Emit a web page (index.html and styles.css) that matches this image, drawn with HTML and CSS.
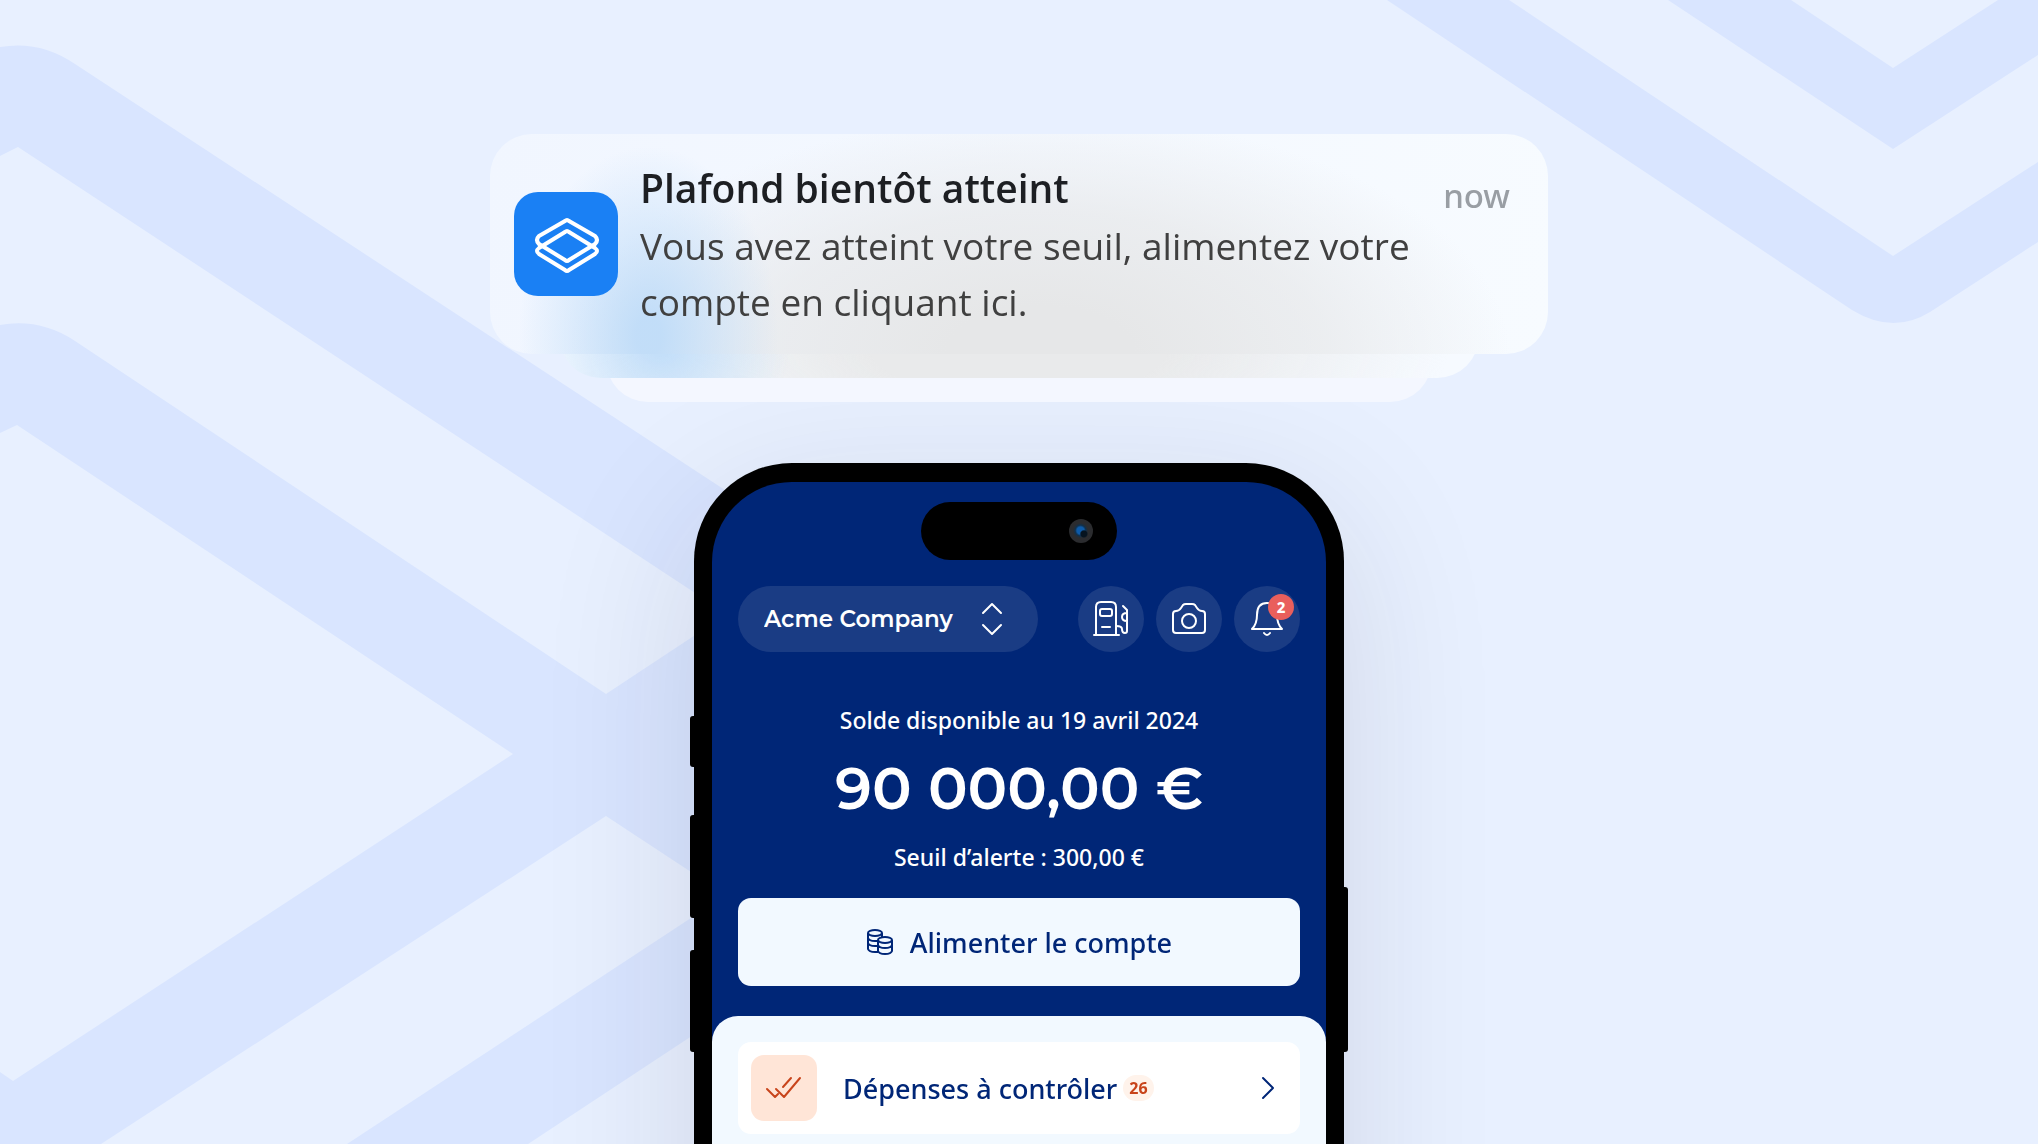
FILE: index.html
```
<!DOCTYPE html>
<html lang="fr">
<head>
  <meta charset="UTF-8">
  <meta name="viewport" content="width=device-width, initial-scale=1.0">
  <title>Plafond bientôt atteint</title>
  <link rel="stylesheet" href="styles.css">
</head>
<body>

<svg class="backdrop" viewBox="0 0 2038 1144" preserveAspectRatio="xMidYMid slice" aria-hidden="true">
  <g fill="#d9e5ff">
    <path d="M0 47Q40 40 75 64L760 513V1144H0Z"/>
    <path d="M1387 0L1852 310Q1893 335 1930 312L2038 242V162L1893 256L1509 0Z"/>
    <path d="M1668 0L1893 149L2038 55V0H1998L1893 68L1791 0Z"/>
  </g>
  <g fill="#e8f0ff">
    <path d="M0 156L18 147L727 614L606 694L75 341Q40 318 0 325Z"/>
    <path d="M0 433L17 425L513 754L13 1081L0 1072Z"/>
    <path d="M101 1144L606 816L726 895L347 1144Z"/>
    <path d="M528 1144L760 991V1144Z"/>
  </g>
</svg>

<main class="scene">
  <section class="stack">
    <article class="notif">
      <div class="notif-icon">
        <svg viewBox="0 0 104 104" fill="none" stroke="#fff" stroke-width="4" stroke-linejoin="round">
          <path d="M51 29Q53 27 55 29L81 44Q85 48 81 52L55 68Q53 70 51 68L25 52Q21 48 25 44Z"/>
          <path d="M51 40Q53 38 55 40L81 56Q85 59 81 62L55 78Q53 80 51 78L25 62Q21 59 25 56Z"/>
        </svg>
      </div>
      <div class="notif-text">
        <h1>Plafond bientôt atteint</h1>
        <p>Vous avez atteint votre seuil, alimentez votre compte en cliquant ici.</p>
      </div>
      <time class="notif-time">now</time>
    </article>
    <div class="peek peek-second"></div>
    <div class="peek peek-third"></div>
  </section>

  <section class="phone">
    <span class="side side-mute"></span>
    <span class="side side-up"></span>
    <span class="side side-down"></span>
    <span class="side side-power"></span>

    <div class="screen">
      <div class="island"><span class="camera"></span></div>

      <header class="topbar">
        <div class="company">
          <select aria-label="Entreprise">
            <option>Acme Company</option>
          </select>
          <svg viewBox="0 0 24 36" fill="none" stroke="#fff" stroke-width="2" stroke-linecap="round" stroke-linejoin="round">
            <path d="M3 12L12 3L21 12M3 24L12 33L21 24"/>
          </svg>
        </div>
        <button class="round" type="button" aria-label="Carburant">
          <svg viewBox="0 0 66 66">
            <path d="M18 49V21Q18 16 23 16H33Q38 16 38 21V49M16 49H41"/>
            <rect x="22" y="23" width="12" height="7" rx="2"/>
            <path d="M24 41H32M45 20L49 24V45Q49 47 47 47Q44 47 44 43Q44 40 38 40M49 27Q44 27 44 31Q44 35 49 35"/>
          </svg>
        </button>
        <button class="round" type="button" aria-label="Appareil photo">
          <svg viewBox="0 0 66 66">
            <path d="M17 28Q17 25 20 25Q23 25 25 22L27 19Q28 18 30 18H36Q38 18 39 19L41 22Q43 25 46 25Q49 25 49 28V44Q49 47 46 47H20Q17 47 17 44Z"/>
            <circle cx="33" cy="35" r="7"/>
          </svg>
        </button>
        <button class="round" type="button" aria-label="Notifications">
          <svg viewBox="0 0 66 66">
            <path d="M18 43H48Q43 38 43 29Q43 17 33 17Q23 17 23 29Q23 38 18 43ZM30 47Q33 51 36 47"/>
          </svg>
          <span class="count">2</span>
        </button>
      </header>

      <div class="balance">
        <p>Solde disponible au 19 avril 2024</p>
        <strong>90 000,00 €</strong>
        <p>Seuil d’alerte : 300,00 €</p>
      </div>

      <button class="fund" type="button">
        <svg viewBox="0 0 28 28" fill="none" stroke="#002677" stroke-width="2">
          <ellipse cx="9" cy="5" rx="7" ry="3"/>
          <path d="M2 5V21Q3 24 9 24H12M2 10Q3 13 9 13H12M2 15Q3 18 9 18H12M16 5V9"/>
          <ellipse cx="19" cy="12" rx="7" ry="3"/>
          <path d="M12 12V23Q13 26 19 26Q25 26 26 23V12M12 17Q13 20 19 20Q25 20 26 17"/>
        </svg>
        Alimenter le compte
      </button>

      <div class="sheet">
        <a class="task" href="#">
          <span class="task-icon">
            <svg viewBox="0 0 38 28" fill="none" stroke="#c8441b" stroke-width="2" stroke-linecap="round" stroke-linejoin="round">
              <path d="M2 15L10 23L13 20M11 15L19 23L35 4M18 13L26 4"/>
            </svg>
          </span>
          <span class="task-label">Dépenses à contrôler</span>
          <span class="task-badge">26</span>
          <svg class="task-arrow" viewBox="0 0 14 24" fill="none" stroke="#002677" stroke-width="2" stroke-linecap="round" stroke-linejoin="round">
            <path d="M2 2L12 12L2 22"/>
          </svg>
        </a>
      </div>
    </div>
  </section>
</main>

</body>
</html>
```

FILE: styles.css
```
* {
  box-sizing: border-box;
}
body {
  margin: 0;
  background-color: #e8f0ff;
  font-family: "Noto Sans", "Open Sans", sans-serif;
}
p, h1 {
  margin: 0;
}
button, select {
  font-family: inherit;
  border: none;
  cursor: pointer;
}
.backdrop {
  position: fixed;
  top: 0;
  left: 0;
  width: 100%;
  height: 100%;
}
.scene {
  position: relative;
  display: flex;
  flex-direction: column;
  align-items: center;
  gap: 61px;
  height: 100vh;
  min-height: 1040px;
  padding-top: 134px;
  overflow: hidden;
}

/* notifications */
.stack {
  position: relative;
  z-index: 1;
  width: 100%;
  max-width: 1058px;
  display: flex;
  flex-direction: column;
  align-items: center;
}
.notif {
  position: relative;
  z-index: 2;
  display: flex;
  align-items: center;
  gap: 22px;
  width: 100%;
  min-height: 220px;
  padding: 24px 38px 24px 24px;
  border-radius: 42px;
  background:
    radial-gradient(130px 190px at 15% 92%, rgba(189, 219, 248, 0.9) 10%, rgba(189, 219, 248, 0.5) 50%, rgba(189, 219, 248, 0) 100%),
    radial-gradient(470px 240px at 52% 100%, #e6e7e8 20%, rgba(230, 231, 232, 0.65) 60%, rgba(230, 231, 232, 0) 100%),
    linear-gradient(100deg, #f1f6ff, #f7fbff);
}
.notif-icon {
  flex: none;
  width: 104px;
  height: 104px;
  border-radius: 24px;
  background-color: #1a80f4;
}
.notif-text {
  flex: 1;
  font-family: "Open Sans", "Noto Sans", sans-serif;
}
.notif-text h1 {
  font-size: 39px;
  font-weight: 600;
  line-height: 60px;
  color: #1d1f23;
}
.notif-text p {
  font-size: 37px;
  line-height: 56px;
  color: #404040;
}
.notif-time {
  align-self: flex-start;
  font-size: 33px;
  font-weight: 500;
  line-height: 76px;
  color: #999ea4;
}
.peek {
  position: relative;
  height: 84px;
  margin-top: -60px;
  border-radius: 42px;
}
.peek-second {
  z-index: 1;
  width: 87%;
  background:
    radial-gradient(130px 120px at 11% 60%, #c4dff9 10%, rgba(196, 223, 249, 0) 100%),
    radial-gradient(430px 160px at 50% 60%, #e9eaeb 35%, rgba(233, 234, 235, 0) 100%),
    #f6faff;
}
.peek-third {
  width: 78%;
  background-color: #f4f7ff;
}

/* phone */
.phone {
  position: relative;
  flex: 1;
  display: flex;
  width: 650px;
  max-width: 96%;
  margin-bottom: -160px;
  padding: 19px 18px 0;
  border-radius: 98px 98px 0 0;
  background-color: #000;
  box-shadow: 0 40px 160px rgba(30, 30, 50, 0.12);
}
.side {
  position: absolute;
  left: -4px;
  width: 8px;
  border-radius: 3px;
  background-color: #000;
}
.side-mute {
  top: 253px;
  height: 51px;
}
.side-up {
  top: 352px;
  height: 103px;
}
.side-down {
  top: 487px;
  height: 102px;
}
.side-power {
  left: auto;
  right: -4px;
  top: 424px;
  height: 165px;
}
.screen {
  position: relative;
  flex: 1;
  display: flex;
  flex-direction: column;
  padding-top: 20px;
  border-radius: 80px 80px 0 0;
  background-color: #002677;
  color: #fff;
}
.island {
  align-self: center;
  display: flex;
  align-items: center;
  justify-content: flex-end;
  width: 196px;
  height: 58px;
  padding-right: 24px;
  border-radius: 29px;
  background-color: #000;
}
.camera {
  width: 24px;
  height: 24px;
  border-radius: 50%;
  background:
    radial-gradient(circle at 62% 62%, #061420 14%, rgba(6, 20, 32, 0) 20%),
    radial-gradient(circle at 48% 48%, #0d5aa8 20%, #10304c 30%, #2b2c2f 42%);
}
.topbar {
  display: flex;
  gap: 12px;
  margin: 26px 26px 0;
}
.company {
  position: relative;
  width: 300px;
  margin-right: auto;
}
.company select {
  appearance: none;
  width: 100%;
  height: 66px;
  padding: 0 26px;
  border-radius: 33px;
  background-color: #1a3c84;
  color: #fff;
  font-family: Montserrat, Inter, sans-serif;
  font-size: 23px;
  font-weight: 600;
}
.company svg {
  position: absolute;
  top: 15px;
  right: 34px;
  width: 24px;
  height: 36px;
  pointer-events: none;
}
.round {
  position: relative;
  width: 66px;
  height: 66px;
  padding: 0;
  border-radius: 50%;
  background-color: #1a3c84;
}
.round svg {
  display: block;
  fill: none;
  stroke: #fff;
  stroke-width: 2;
  stroke-linecap: round;
  stroke-linejoin: round;
}
.count {
  position: absolute;
  top: 8px;
  right: 6px;
  width: 26px;
  border-radius: 13px;
  background-color: #e95f5c;
  color: #fff;
  font-size: 15px;
  font-weight: 800;
  line-height: 26px;
}
.balance {
  padding: 51px 26px 24px;
  text-align: center;
}
.balance p {
  font-size: 23px;
  font-weight: 500;
  line-height: 34px;
}
.balance strong {
  display: block;
  font-family: Montserrat, Inter, sans-serif;
  font-size: 59px;
  font-weight: 600;
  line-height: 103px;
}
.fund {
  display: flex;
  align-items: center;
  justify-content: center;
  gap: 16px;
  min-height: 88px;
  margin: 0 26px 30px;
  border-radius: 13px;
  background-color: #f2f9ff;
  color: #002677;
  font-size: 27px;
  font-weight: 500;
}
.fund svg {
  width: 28px;
  height: 28px;
}
.sheet {
  flex: 1;
  padding: 26px;
  border-radius: 26px 26px 0 0;
  background-color: #f2f9ff;
}
.task {
  display: flex;
  align-items: center;
  padding: 13px 25px 13px 13px;
  border-radius: 13px;
  background-color: #fff;
  color: #002677;
  font-size: 27px;
  font-weight: 500;
  text-decoration: none;
}
.task-icon {
  display: flex;
  align-items: center;
  justify-content: center;
  width: 66px;
  height: 66px;
  margin-right: 26px;
  border-radius: 13px;
  background-color: #ffe5d7;
}
.task-icon svg {
  width: 38px;
  height: 28px;
}
.task-badge {
  margin-left: 6px;
  padding: 0 6px;
  border-radius: 13px;
  background-color: #fff3eb;
  color: #c8441b;
  font-size: 16px;
  font-weight: 700;
  line-height: 26px;
}
.task-arrow {
  width: 14px;
  height: 24px;
  margin-left: auto;
}
```
